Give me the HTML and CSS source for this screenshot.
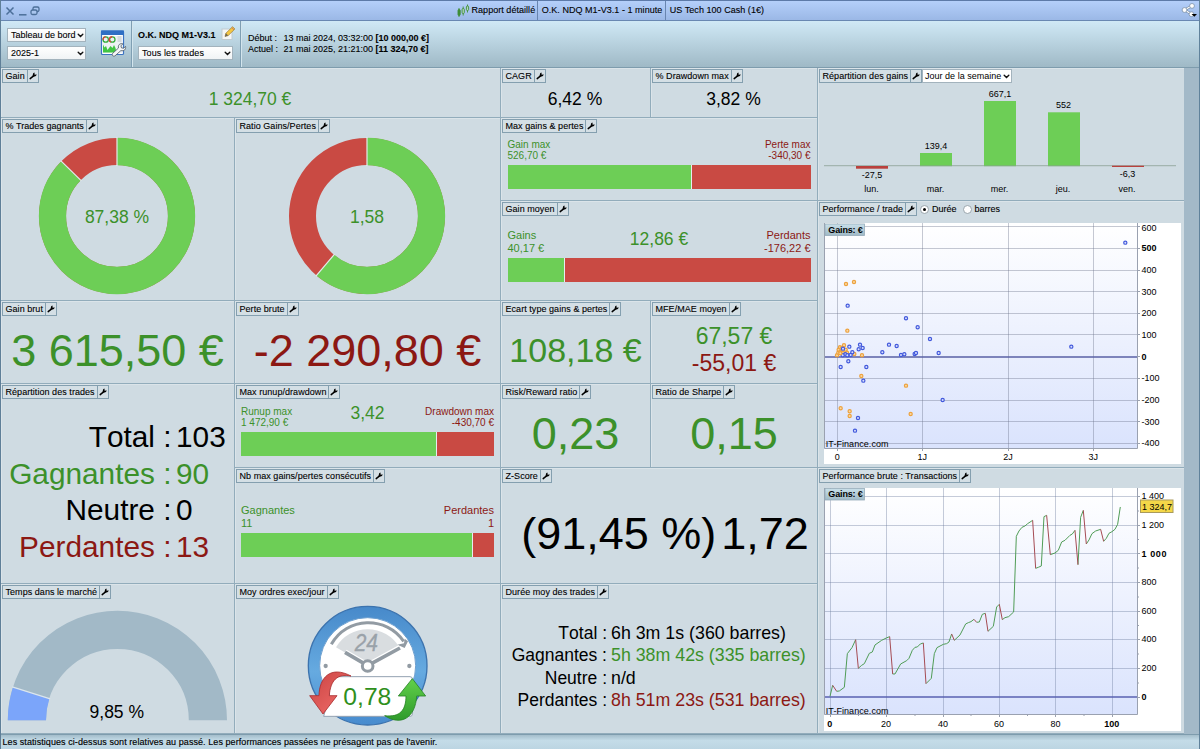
FILE: index.html
```html
<!DOCTYPE html>
<html lang="fr">
<head>
<meta charset="utf-8">
<title>Rapport détaillé</title>
<link rel="stylesheet" href="styles.css">
</head>
<body>
<svg class="defs" width="0" height="0" aria-hidden="true">
  <symbol id="wrench" viewBox="0 0 8 8"><path d="M1.200 6.600 4.600 3.900" stroke="#000" stroke-width="1.500" stroke-linecap="round"/><path d="M3.900 2.200C4.100 1.200 5 .7 5.900.9L5.200 2l.8.8L7.500 2.300c.2 1.200-.6 2.200-2 2.200H3.500Z" fill="#000"/></symbol>
  <symbol id="chev" viewBox="0 0 7 5"><path d="M1.200 1.200 3.500 3.500 5.800 1.200" fill="none" stroke="#111" stroke-width="1.400" stroke-linecap="round"/></symbol>
  <linearGradient id="plotbg" x1="0" y1="0" x2="0" y2="1"><stop offset="0" stop-color="#fff"/><stop offset="1" stop-color="#dae3fd"/></linearGradient>
  <linearGradient id="tagbg" x1="0" y1="0" x2="0" y2="1"><stop offset="0" stop-color="#c9e0ea"/><stop offset="1" stop-color="#9fb9c6"/></linearGradient>
</svg>
<div class="window">
  <header class="titlebar">
    <svg class="winctl" width="36" height="12" viewBox="0 0 36 12" fill="none" stroke="#4c6f99" stroke-width="1.300"><path d="M1.500 2.500 8.500 9.500M8.500 2.500 1.500 9.500" stroke-width="1.500"/><path d="M14 9.800h7.500" stroke-width="1.500"/><rect x="28" y="2" width="6" height="4.500" rx="1.500"/><rect x="26" y="5" width="6" height="4.500" rx="1.500" fill="#a9c5ee"/></svg>
    <div class="titles">
      <svg width="13" height="14" viewBox="0 0 13 14" fill="none" stroke="#3f8d38" stroke-width=".9"><path d="M2 4v9M6.200 2.500v9M10.500.5v8"/><rect x="1" y="5.500" width="2.200" height="6" rx="1" fill="#3f8d38"/><rect x="5.100" y="4.500" width="2.200" height="5" rx="1" fill="#b4d8c0"/><rect x="9.400" y="2" width="2.200" height="4.500" rx="1" fill="#b4d8c0"/></svg>
      <span class="title first">Rapport détaillé</span>
      <span class="title">O.K. NDQ M1-V3.1 - 1 minute</span>
      <span class="title">US Tech 100 Cash (1€)</span>
    </div>
    <svg class="share" width="17" height="15" viewBox="0 0 17 15"><path d="M11 2.800 3.500 7l7.500 4.300" stroke="#71869e" stroke-width="2.400" fill="none"/><path d="M11 2.800 3.500 7l7.500 4.300" stroke="#fff" stroke-width="1.300" fill="none"/><g fill="#fff" stroke="#71869e" stroke-width=".7"><circle cx="11" cy="2.900" r="2.400"/><circle cx="3.500" cy="7" r="2.400"/><circle cx="10.500" cy="11.200" r="2.400"/></g><path d="M10.500 11h5.500l-2.700 2.700z" fill="#000"/></svg>
  </header>
  <div class="toolbar">
    <div class="tool tool-a">
      <div class="stack">
        <div class="select w78"><span>Tableau de bord</span><svg width="7" height="5"><use href="#chev"/></svg></div>
        <div class="select w78"><span>2025-1</span><svg width="7" height="5"><use href="#chev"/></svg></div>
      </div>
      <svg width="27" height="27" viewBox="0 0 27 27"><rect x="1.500" y="1" width="22" height="23.500" rx="1" fill="#fff" stroke="#3c73c2" stroke-width="1.200"/><rect x="1" y=".5" width="23" height="4.500" fill="#2f6fc4"/><rect x="3" y="6" width="19" height="17" fill="#edf1f4"/><circle cx="5.700" cy="9.500" r="2.700" fill="none" stroke="#36ad3b" stroke-width="1.300"/><path d="M5.700 6.800A2.700 2.700 0 0 0 3.100 10" fill="none" stroke="#e0413b" stroke-width="1.300"/><circle cx="12.300" cy="9.500" r="2.700" fill="none" stroke="#36ad3b" stroke-width="1.300"/><path d="M12.300 6.800A2.700 2.700 0 0 0 11 12" fill="none" stroke="#e0413b" stroke-width="1.300"/><path d="M17.500 7h4M17.500 9h4M17.500 11h4" stroke="#bcc3c9"/><path d="M3 22.500v-8l1.500 3 1.500-1.500 1.500 4 1.500-2 1.500-2 2 2 1.500-3 1.500 3 1 4.500Z" fill="#42c544"/><path d="M12.500 23.500 18.500 18c-.8-3 1.500-5 4.400-4.200L20.900 15.900l.6 2 2.200.3 1.800-1.900c.8 3-1.600 5.100-4.600 4.300L14.800 26c-1.600.8-3.400-1-2.300-2.500Z" fill="#f4f5f6" stroke="#586570" stroke-width=".9"/></svg>
    </div>
    <div class="tool tool-b">
      <div class="name-row"><b>O.K. NDQ M1-V3.1</b>
        <svg width="15" height="15" viewBox="0 0 15 15"><rect x="1" y="3" width="10" height="10.500" fill="#f5f6f6" stroke="#c2cbd0"/><path d="m4 10.500.9-3.300 6.700-6.500 2.300 2.300-6.700 6.600Z" fill="#f5c742" stroke="#8a6d2d" stroke-width=".6"/><path d="m4 10.500.9-3.200 2.300 2.300Z" fill="#6c6558"/><path d="m10.700 1.600 2.300 2.300" stroke="#c66" stroke-width=".8"/></svg>
      </div>
      <div class="select w94"><span>Tous les trades</span><svg width="7" height="5"><use href="#chev"/></svg></div>
    </div>
    <div class="dates">
      <span>Début :</span><span>13 mai 2024, 03:32:00 <b>[10 000,00 €]</b></span>
      <span>Actuel :</span><span>21 mai 2025, 21:21:00 <b>[11 324,70 €]</b></span>
    </div>
  </div>

  <main class="board">
    <section class="panel gain"><h2><span>Gain</span><i><svg><use href="#wrench"/></svg></i></h2>
      <div class="body pos f18">1 324,70 €</div></section>

    <section class="panel cagr"><h2><span>CAGR</span><i><svg><use href="#wrench"/></svg></i></h2>
      <div class="body f18">6,42 %</div></section>

    <section class="panel ddmax"><h2><span>% Drawdown max</span><i><svg><use href="#wrench"/></svg></i></h2>
      <div class="body f18">3,82 %</div></section>

    <section class="panel repart"><div class="head-row"><h2><span>Répartition des gains</span><i><svg><use href="#wrench"/></svg></i></h2><div class="select w90"><span>Jour de la semaine</span><svg width="7" height="5"><use href="#chev"/></svg></div></div>
      <svg class="chart" width="366" height="117" viewBox="818 83 366 117">
        <g fill="#6dce56"><rect x="920" y="153" width="32" height="13"/><rect x="984" y="101" width="32" height="65"/><rect x="1048" y="112.300" width="32" height="53.700"/></g>
        <path d="M824 165.700h352" stroke="#a3b5b0" stroke-width="1.200"/>
        <path d="M920 165.700h32M984 165.700h32M1048 165.700h32" stroke="#72b866"/>
        <g fill="#b9403d"><rect x="856" y="166" width="32" height="2.700"/><rect x="1112" y="165.700" width="32" height="1.300"/></g>
        <g text-anchor="middle"><text x="872" y="178.300">-27,5</text><text x="936" y="148.800">139,4</text><text x="1000" y="97.300">667,1</text><text x="1063.500" y="108.300">552</text><text x="1127.500" y="177">-6,3</text>
        <text x="871.500" y="191.700">lun.</text><text x="935.500" y="191.700">mar.</text><text x="999.500" y="191.700">mer.</text><text x="1063" y="191.700">jeu.</text><text x="1127" y="191.700">ven.</text></g>
      </svg></section>

    <section class="panel pct"><h2><span>% Trades gagnants</span><i><svg><use href="#wrench"/></svg></i></h2>
      <div class="body"><svg class="donut" width="158" height="158" viewBox="-79 -79 158 158">
        <circle r="64.500" fill="none" stroke="#c94a43" stroke-width="27"/>
        <circle r="64.500" fill="none" stroke="#6dce56" stroke-width="27.300" pathLength="100" stroke-dasharray="87.380 12.620" transform="rotate(-90)"/>
        <path d="M0-79V-50M-56.300-55.400-35.600-35.100" stroke="#e3eaec" stroke-width="1.200"/>
        <text y="7.300" text-anchor="middle" class="big pos">87,38 %</text></svg></div></section>

    <section class="panel ratio"><h2><span>Ratio Gains/Pertes</span><i><svg><use href="#wrench"/></svg></i></h2>
      <div class="body"><svg class="donut" width="158" height="158" viewBox="-79 -79 158 158">
        <circle r="64.500" fill="none" stroke="#c94a43" stroke-width="27"/>
        <circle r="64.500" fill="none" stroke="#6dce56" stroke-width="27.300" pathLength="100" stroke-dasharray="61.200 38.800" transform="rotate(-90)"/>
        <path d="M0-79V-50M-51.100 60.200-32.400 38.100" stroke="#e3eaec" stroke-width="1.200"/>
        <text y="7.300" text-anchor="middle" class="big pos">1,58</text></svg></div></section>

    <section class="panel maxgp"><h2><span>Max gains &amp; pertes</span><i><svg><use href="#wrench"/></svg></i></h2>
      <div class="bars mid pb11"><div class="legend"><span class="pos">Gain max<br>526,70 €</span><span class="neg right">Perte max<br>-340,30 €</span></div>
      <div class="bar"><div class="win" style="flex-grow:526.7"></div><div class="loss" style="flex-grow:340.3"></div></div></div></section>

    <section class="panel gmoy"><h2><span>Gain moyen</span><i><svg><use href="#wrench"/></svg></i></h2>
      <div class="bars mid pb18"><div class="legend wide"><span class="pos">Gains<br>40,17 €</span><strong class="pos">12,86 €</strong><span class="neg right">Perdants<br>-176,22 €</span></div>
      <div class="bar"><div class="win" style="flex-grow:40.17"></div><div class="loss" style="flex-grow:176.22"></div></div></div></section>

    <section class="panel scatter"><div class="head-row"><h2><span>Performance / trade</span><i><svg><use href="#wrench"/></svg></i></h2><label class="radio on"><i></i>Durée</label><label class="radio"><i></i>barres</label></div>
      <svg class="chart" width="366" height="251" viewBox="818 216 366 251">
        <rect x="824" y="223" width="357" height="241" fill="#fff"/>
        <rect x="824.500" y="223.500" width="313" height="225" fill="url(#plotbg)"/>
        <g stroke="#68708a" stroke-opacity=".38"><path d="M825 226.500h312M825 248.500h312M825 270.500h312M825 291.500h312M825 313.500h312M825 334.500h312M825 378.500h312M825 400.500h312M825 421.500h312M825 443.500h312M837.500 223v225M922.500 223v225M1008.500 223v225M1093.500 223v225"/></g>
        <path d="M824.500 223v225.500h313V223M1137 226.500h3M1137 248.500h3M1137 270.500h3M1137 291.500h3M1137 313.500h3M1137 334.500h3M1137 356.500h3M1137 378.500h3M1137 400.500h3M1137 421.500h3M1137 443.500h3M837.500 448v3M922.500 448v3M1008.500 448v3M1093.500 448v3" fill="none" stroke="#9aa1b0"/>
        <path d="M825 357h312" stroke="#5961a5" stroke-width="1.300"/>
        <g transform="translate(815 200) scale(.3333)" stroke-width="3.600">
          <g fill="#f9d9a5" stroke="#eda23e"><circle cx="93" cy="252" r="4.800"/><circle cx="117" cy="246" r="4.800"/><circle cx="97" cy="392" r="4.800"/><circle cx="66" cy="466" r="4.800"/><circle cx="70" cy="458" r="4.800"/><circle cx="71" cy="449" r="4.800"/><circle cx="75" cy="442" r="4.800"/><circle cx="87" cy="436" r="4.800"/><circle cx="80" cy="445" r="4.800"/><circle cx="92" cy="449" r="4.800"/><circle cx="76" cy="456" r="4.800"/><circle cx="84" cy="459" r="4.800"/><circle cx="96" cy="458" r="4.800"/><circle cx="118" cy="462" r="4.800"/><circle cx="141" cy="466" r="4.800"/><circle cx="139" cy="528" r="4.800"/><circle cx="77" cy="625" r="4.800"/><circle cx="104" cy="634" r="4.800"/><circle cx="104" cy="648" r="4.800"/><circle cx="273" cy="557" r="4.800"/><circle cx="287" cy="642" r="4.800"/></g>
          <g fill="#d9e0fc" stroke="#4259dc"><circle cx="931" cy="128" r="4.800"/><circle cx="98" cy="317" r="4.800"/><circle cx="273" cy="355" r="4.800"/><circle cx="308" cy="382" r="4.800"/><circle cx="345" cy="417" r="4.800"/><circle cx="371" cy="459" r="4.800"/><circle cx="769" cy="440" r="4.800"/><circle cx="222" cy="434" r="4.800"/><circle cx="245" cy="438" r="4.800"/><circle cx="202" cy="457" r="4.800"/><circle cx="258" cy="465" r="4.800"/><circle cx="268" cy="463" r="4.800"/><circle cx="299" cy="462" r="4.800"/><circle cx="303" cy="459" r="4.800"/><circle cx="135" cy="434" r="4.800"/><circle cx="143" cy="444" r="4.800"/><circle cx="131" cy="448" r="4.800"/><circle cx="103" cy="440" r="4.800"/><circle cx="84" cy="446" r="4.800"/><circle cx="112" cy="457" r="4.800"/><circle cx="91" cy="463" r="4.800"/><circle cx="83" cy="466" r="4.800"/><circle cx="97" cy="466" r="4.800"/><circle cx="107" cy="465" r="4.800"/><circle cx="100" cy="484" r="4.800"/><circle cx="77" cy="501" r="4.800"/><circle cx="154" cy="501" r="4.800"/><circle cx="145" cy="542" r="4.800"/><circle cx="383" cy="600" r="4.800"/><circle cx="129" cy="654" r="4.800"/><circle cx="120" cy="692" r="4.800"/></g>
          <circle cx="76" cy="460" r="4.800" fill="#f9d9a5" stroke="#eda23e"/>
        </g>
        <rect x="825" y="224" width="39.500" height="11.500" fill="url(#tagbg)" stroke="#94abb8" stroke-width=".8"/><text x="828.300" y="232.800" class="b" textLength="34.500">Gains: €</text>
        <text x="825.800" y="447" textLength="62.700">IT-Finance.com</text>
        <text x="1141.500" y="231.300">600</text><text x="1141.500" y="251.300" class="b">500</text><text x="1141.500" y="273">400</text><text x="1141.500" y="294.500">300</text><text x="1141.500" y="316">200</text><text x="1141.500" y="337.500">100</text><text x="1141.500" y="360" class="b">0</text><text x="1141.500" y="381.300">-100</text><text x="1141.500" y="403">-200</text><text x="1141.500" y="424.500">-300</text><text x="1141.500" y="446">-400</text>
        <g text-anchor="middle"><text x="837.300" y="460">0</text><text x="922.300" y="460">1J</text><text x="1008" y="460">2J</text><text x="1093.300" y="460">3J</text></g>
      </svg></section>

    <section class="panel gbrut"><h2><span>Gain brut</span><i><svg><use href="#wrench"/></svg></i></h2>
      <div class="body pos f45">3 615,50 €</div></section>
    <section class="panel pbrut"><h2><span>Perte brute</span><i><svg><use href="#wrench"/></svg></i></h2>
      <div class="body neg f45">-2 290,80 €</div></section>
    <section class="panel ecart"><h2><span>Ecart type gains &amp; pertes</span><i><svg><use href="#wrench"/></svg></i></h2>
      <div class="body pos f34">108,18 €</div></section>
    <section class="panel mfe"><h2><span>MFE/MAE moyen</span><i><svg><use href="#wrench"/></svg></i></h2>
      <div class="body two"><span class="pos">67,57 €</span><span class="neg">-55,01 €</span></div></section>

    <section class="panel rtrades"><h2><span>Répartition des trades</span><i><svg><use href="#wrench"/></svg></i></h2>
      <dl class="body counts"><dt>Total :</dt><dd>103</dd><dt class="pos">Gagnantes :</dt><dd class="pos">90</dd><dt>Neutre :</dt><dd>0</dd><dt class="neg">Perdantes :</dt><dd class="neg">13</dd></dl></section>

    <section class="panel runup"><h2><span>Max runup/drawdown</span><i><svg><use href="#wrench"/></svg></i></h2>
      <div class="bars pb11"><div class="legend"><span class="pos">Runup max<br>1 472,90 €</span><strong class="pos high">3,42</strong><span class="neg right">Drawdown max<br>-430,70 €</span></div>
      <div class="bar"><div class="win" style="flex-grow:1472.9"></div><div class="loss" style="flex-grow:430.7"></div></div></div></section>

    <section class="panel rr"><h2><span>Risk/Reward ratio</span><i><svg><use href="#wrench"/></svg></i></h2>
      <div class="body pos f45">0,23</div></section>
    <section class="panel sharpe"><h2><span>Ratio de Sharpe</span><i><svg><use href="#wrench"/></svg></i></h2>
      <div class="body pos f45">0,15</div></section>

    <section class="panel consec"><h2><span>Nb max gains/pertes consécutifs</span><i><svg><use href="#wrench"/></svg></i></h2>
      <div class="bars pb26"><div class="legend wide"><span class="pos">Gagnantes<br>11</span><span class="neg right">Perdantes<br>1</span></div>
      <div class="bar"><div class="win" style="flex-grow:11"></div><div class="loss" style="flex-grow:1"></div></div></div></section>

    <section class="panel zscore"><h2><span>Z-Score</span><i><svg><use href="#wrench"/></svg></i></h2>
      <div class="body f45 z"><span>(91,45 %)</span><span>1,72</span></div></section>

    <section class="panel curve"><h2><span>Performance brute : Transactions</span><i><svg><use href="#wrench"/></svg></i></h2>
      <svg class="chart" width="366" height="250" viewBox="818 483 366 250">
        <rect x="824" y="488" width="357" height="243" fill="#fff"/>
        <rect x="824.500" y="488.500" width="313" height="226" fill="url(#plotbg)"/>
        <g stroke="#687a9a" stroke-opacity=".38"><path d="M825 496.500h312M825 525.500h312M825 553.500h312M825 582.500h312M825 611.500h312M825 639.500h312M825 668.500h312M830.500 488v226M886.500 488v226M943.500 488v226M999.500 488v226M1055.500 488v226M1112.500 488v226"/></g>
        <path d="M824.500 488v226.500h313V488M1137 496.500h3M1137 525.500h3M1137 553.500h3M1137 582.500h3M1137 611.500h3M1137 639.500h3M1137 668.500h3M1137 697.500h3M1137 511h2M1137 539.500h2M1137 568h2M1137 597h2M1137 625.500h2M1137 654h2M1137 683h2M830.500 714v3M886.500 714v3M943.500 714v3M999.500 714v3M1055.500 714v3M1112.500 714v3M858.500 714v2M915 714v2M971 714v2M1027.500 714v2M1084 714v2" fill="none" stroke="#9aa1b0"/>
        <path d="M825 697h312" stroke="#5961b0" stroke-width="1.300"/>
        <g transform="translate(815 465) scale(.3333)" fill="none" stroke-width="3" stroke-linejoin="round">
          <path stroke="#4f9c55" d="M45 694 53 661M65 679 73 678 88 667 97 566 111 548 122 524M130 610 140 601 148 596 163 565 172 561 180 540 200 526 214 519 224 515M233 627 240 627 257 597 275 587 282 580 292 556 300 547 307 546 316 537 325 534M333 656 349 640 358 566 366 548 385 538 395 536 402 531 410 507M418 526 435 510 452 477 460 473 468 470 477 463M485 472 493 471 502 448 511 445M519 499 535 484 545 426 553 418M562 464 570 458 581 455 596 441 604 214 612 198 621 187 630 183 638 176 653 166M662 310 670 307 679 303 687 155 695 151M706 269 720 264 730 256 740 231 750 226 765 211 772 207 780 196M789 299 797 157 805 136M814 237 822 225 831 206 842 198 857 193M866 229 874 220 882 205 891 200 900 193 908 178 916 126"/>
          <path stroke="#a54a52" d="M53 661 65 679M122 524 130 610M224 515 233 627M325 534 333 656M410 507 418 526M477 463 485 472M511 445 519 499M553 418 562 464M653 166 662 310M695 151 706 269M780 196 789 299M805 136 814 237M857 193 866 229"/>
        </g>
        <rect x="825" y="488.500" width="39.500" height="11.500" fill="url(#tagbg)" stroke="#94abb8" stroke-width=".8"/><text x="828.300" y="497.200" class="b" textLength="34.500">Gains: €</text>
        <text x="825.800" y="713.500" textLength="62.700">IT-Finance.com</text>
        <text x="1141.500" y="499.300">1 400</text><text x="1141.500" y="528">1 200</text><text x="1141.500" y="556.500" class="b" textLength="25">1 000</text><text x="1141.500" y="585.300">800</text><text x="1141.500" y="613.800">600</text><text x="1141.500" y="642.300">400</text><text x="1141.500" y="671">200</text><text x="1141.500" y="700" class="b">0</text>
        <rect x="1140.500" y="500" width="32.500" height="12.500" fill="#f4d748" stroke="#a99a5c"/><text x="1142" y="509.500">1 324,7</text>
        <g text-anchor="middle"><text x="829.700" y="727" class="b">0</text><text x="886" y="727">20</text><text x="943" y="727">40</text><text x="999" y="727">60</text><text x="1055.500" y="727">80</text><text x="1111.700" y="727" class="b">100</text></g>
      </svg></section>

    <section class="panel temps"><h2><span>Temps dans le marché</span><i><svg><use href="#wrench"/></svg></i></h2>
      <svg class="chart" width="233" height="134" viewBox="1 599 233 134">
        <path d="M26.900 720.300A90.500 90.500 0 0 1 207.900 720.300" fill="none" stroke="#a2b9c7" stroke-width="38.200"/>
        <path d="M26.900 720.300A90.500 90.500 0 0 1 31.200 692.700" fill="none" stroke="#7ba5fa" stroke-width="38.200"/>
        <path d="M12.200 686.900 50.200 698.900" stroke="#dce6ec" stroke-width="1.200"/>
        <text x="116.800" y="718.300" text-anchor="middle" class="big">9,85 %</text>
      </svg></section>

    <section class="panel ordres"><h2><span>Moy ordres exec/jour</span><i><svg><use href="#wrench"/></svg></i></h2>
      <svg class="chart" width="265" height="134" viewBox="0 57 795 402">
        <defs><linearGradient id="ring" x1="0" y1="0" x2="0" y2="1"><stop offset="0" stop-color="#4789ca"/><stop offset=".55" stop-color="#66aae0"/><stop offset="1" stop-color="#478bce"/></linearGradient>
        <linearGradient id="redarr" x1="0" y1="0" x2="1" y2="1"><stop offset="0" stop-color="#c94343"/><stop offset="1" stop-color="#f4706c"/></linearGradient>
        <linearGradient id="grnarr" x1="0" y1="0" x2="0" y2="1"><stop offset="0" stop-color="#62d04a"/><stop offset="1" stop-color="#2f9b2c"/></linearGradient></defs>
        <circle cx="398" cy="257" r="178" fill="url(#ring)" stroke="#3c73ae" stroke-width="4"/>
        <circle cx="398" cy="257" r="144" fill="#fff" stroke="#6d9fcf" stroke-width="3"/>
        <path d="M398 257 303 202A110 110 0 0 1 493 202Z" fill="#d9dde0"/>
        <path d="M289 193C335 109 455 107 506 184" fill="none" stroke="#929ba3" stroke-width="9"/>
        <path d="M519 184 509 204 487 194 507 190 509 176Z" fill="#929ba3"/>
        <text x="394" y="213" text-anchor="middle" class="h24" textLength="70" lengthAdjust="spacingAndGlyphs">24</text>
        <path d="M330 217 398 257 495 204" fill="none" stroke="#fff" stroke-width="18"/>
        <path d="M330 217 398 257 495 204" fill="none" stroke="#929ba3" stroke-width="11"/>
        <circle cx="398" cy="258" r="16" fill="#fff" stroke="#929ba3" stroke-width="9"/>
        <circle cx="272" cy="258" r="6.500" fill="#929ba3"/><circle cx="523" cy="258" r="6.500" fill="#929ba3"/>
        <path d="M282 290H525Q532 290 532 297V402Q532 409 525 409H266L283 347Z" fill="#fff" stroke="#94a2b1" stroke-width="3"/>
        <path d="M348 288C307 280 286 301 283 347L306 347 264 402 224 347 252 347C253 292 287 256 348 288Z" fill="url(#redarr)" stroke="#a92f30" stroke-width="2.500"/>
        <path d="M449 407C496 413 513 389 513 348L490 348 532 296 572 348 545 348C541 414 498 439 449 407Z" fill="url(#grnarr)" stroke="#288425" stroke-width="2.500"/>
        <text x="397" y="375" text-anchor="middle" class="h78">0,78</text>
      </svg></section>

    <section class="panel duree"><h2><span>Durée moy des trades</span><i><svg><use href="#wrench"/></svg></i></h2>
      <dl class="body times"><dt>Total :</dt><dd>6h 3m 1s (360 barres)</dd><dt>Gagnantes :</dt><dd class="pos">5h 38m 42s (335 barres)</dd><dt>Neutre :</dt><dd>n/d</dd><dt>Perdantes :</dt><dd class="neg">8h 51m 23s (531 barres)</dd></dl></section>
  </main>
  <footer class="status">Les statistiques ci-dessus sont relatives au passé. Les performances passées ne présagent pas de l'avenir.</footer>
</div>
</body>
</html>
```
FILE: styles.css
```css
* { box-sizing: border-box; }
body { margin: 0; font-family: "Liberation Sans", Arial, sans-serif; font-size: 9px; color: #000; }
svg { display: block; flex: none; }
.defs { position: absolute; }
.window { width: 1200px; height: 749px; display: flex; flex-direction: column; background: #a3b9c8; border-left: 1px solid #5f7f98; border-right: 1px solid #60829b; overflow: hidden; white-space: nowrap; }

.titlebar { height: 21px; flex: none; display: flex; align-items: center; justify-content: space-between; background: linear-gradient(#b4cffa, #9bb8e6); border-top: 1px solid #5d7aa8; border-bottom: 1px solid #6988b2; -webkit-text-stroke: 0.1px #000; }
.winctl { margin-left: 4px; }
.titles { display: flex; align-items: center; height: 19px; margin-left: 407px; margin-right: auto; padding-left: 9px; }
.title { line-height: 19px; border-left: 1px solid #6885b0; padding: 0 3px; letter-spacing: 0.04px; }
.title + .title { padding-left: 3.500px; }
.title.first { border: 0; padding: 0 2px 0 1.500px; }
.share { margin-right: 1px; }

.toolbar { height: 47px; flex: none; display: flex; background: linear-gradient(#d0e9f6, #9fb9c6); border-bottom: 1px solid #7e9cad; -webkit-text-stroke: 0.1px #000; }
.tool { border-right: 1px solid #7f9fb3; box-shadow: 1px 0 #d3e5ed; padding-top: 7px; }
.tool-a { width: 131px; display: flex; gap: 14px; padding-left: 6px; }
.tool-a > svg { margin-top: 2px; }
.stack { display: flex; flex-direction: column; gap: 4px; }
.select { height: 14px; display: flex; align-items: center; justify-content: space-between; background: linear-gradient(#fff, #f0f3f5); border: 1px solid #a3b3bd; padding: 0 1.500px 0 3px; }
.w78 { width: 79px; }
.w94 { width: 95px; letter-spacing: 0.1px; }
.w90 { width: 90px; background: #fff; padding-left: 2px; }
.tool-b { width: 109px; padding-left: 6px; padding-top: 5px; }
.name-row { display: flex; align-items: center; justify-content: space-between; width: 98px; height: 18px; margin-bottom: 2px; }
.name-row svg { margin-top: -3px; }
.dates { display: grid; grid-template-columns: 35.500px auto; grid-auto-rows: 11px; line-height: 11px; padding: 12px 0 0 7px; align-content: start; }

.board { width: 1183px; flex: none; display: grid; grid-template-columns: 234px 266px 150px 167px 366px; grid-template-rows: 50px 83px 100px 83px 84px 116px 150px; }
.panel { background: #cfdbe2; border-right: 1px solid #92acbb; border-bottom: 1px solid #92acbb; display: flex; flex-direction: column; min-width: 0; min-height: 0; box-shadow: inset 1px 1px #dbe4e9; overflow: hidden; }
.panel h2 { margin: 1px 0 0 1px; height: 14px; flex: none; align-self: flex-start; display: flex; font-size: 9px; font-weight: normal; line-height: 12px; background: #d4dfe5; border: 1px solid #849faf; letter-spacing: 0.05px; -webkit-text-stroke: 0.1px #000; }
.panel h2 span { padding: 0 2px 0 2.500px; }
.panel h2 i { width: 11px; border-left: 1px solid #849faf; display: flex; align-items: center; justify-content: center; }
.panel h2 i svg { width: 8px; height: 8px; }
.head-row { display: flex; flex: none; }
.head-row .select { margin: 1px 0 0; }
.radio { display: flex; align-items: center; gap: 3px; margin: 1px 0 0 3px; height: 14px; -webkit-text-stroke: 0.1px #000; }
.radio + .radio { margin-left: 6px; }
.radio i { width: 9px; height: 9px; border-radius: 50%; background: #fff; border: 1px solid #9aa6ad; display: flex; align-items: center; justify-content: center; }
.radio.on i::after { content: ""; width: 3px; height: 3px; border-radius: 50%; background: #000; }

.gain { grid-area: 1 / 1 / 2 / 3; }
.cagr { grid-area: 1 / 3; }
.ddmax { grid-area: 1 / 4; }
.repart { grid-area: 1 / 5 / 3 / 6; }
.pct { grid-area: 2 / 1 / 4 / 2; }
.ratio { grid-area: 2 / 2 / 4 / 3; }
.maxgp { grid-area: 2 / 3 / 3 / 5; }
.gmoy { grid-area: 3 / 3 / 4 / 5; }
.scatter { grid-area: 3 / 5 / 6 / 6; }
.gbrut { grid-area: 4 / 1; }
.pbrut { grid-area: 4 / 2; }
.ecart { grid-area: 4 / 3; }
.mfe { grid-area: 4 / 4; }
.rtrades { grid-area: 5 / 1 / 7 / 2; }
.runup { grid-area: 5 / 2; }
.rr { grid-area: 5 / 3; }
.sharpe { grid-area: 5 / 4; }
.consec { grid-area: 6 / 2; }
.zscore { grid-area: 6 / 3 / 7 / 5; }
.curve { grid-area: 6 / 5 / 8 / 6; }
.temps { grid-area: 7 / 1; }
.ordres { grid-area: 7 / 2; }
.duree { grid-area: 7 / 3 / 8 / 5; }
.repart, .scatter, .curve { border-right: 0; }

.body { flex: 1; min-height: 0; margin: 0; display: flex; align-items: center; justify-content: center; line-height: 1; }
.donut { margin: -2px 1px 0 0; }
.pos { color: #3c912a; fill: #3c912a; }
.neg { color: #8c1813; fill: #8c1813; }
.f18 { font-size: 17.500px; padding-right: 1px; }
.f34 { font-size: 34px; padding-top: 1px; }
.f45 { font-size: 45px; padding-top: 1px; }
.two { flex-direction: column; font-size: 23px; }
.two span { line-height: 27px; }
.z { gap: 5px; padding-left: 12px; }
.z span { flex: none; }
.counts { display: grid; grid-template-columns: 170.500px auto; grid-auto-rows: 36.700px; column-gap: 4.500px; font-size: 29.800px; line-height: 36.700px; justify-content: start; align-content: start; padding-top: 20px; font-kerning: none; }
.times { display: grid; grid-template-columns: 106px auto; grid-auto-rows: 22.300px; column-gap: 4px; font-size: 17.800px; line-height: 22.300px; justify-content: start; align-content: start; padding-top: 23px; font-kerning: none; }
.times dt { font-size: 17.500px; }
dt { text-align: right; }
dd { margin: 0; }

.bars { flex: 1; display: flex; flex-direction: column; justify-content: flex-end; padding-left: 6px; padding-right: 6px; }
.bars.mid { padding-left: 6.500px; padding-right: 6.500px; }
.pb11 { padding-bottom: 11px; }
.pb18 { padding-bottom: 18px; }
.pb26 { padding-bottom: 26px; }
.legend { display: flex; justify-content: space-between; font-size: 10px; line-height: 11.700px; margin-bottom: 3px; }
.legend.wide { font-size: 11px; line-height: 13px; }
.legend span { flex: 1; }
.legend .right { text-align: right; }
.legend strong { font-size: 17.500px; font-weight: normal; line-height: 20px; }
.legend strong.high { line-height: 15px; }
.bar { display: flex; gap: 1px; height: 24px; background: #e6edf0; }
.win { flex: 1 1 0; background: #6dce56; }
.loss { flex: 1 1 0; background: #c94a43; }

.chart text { font-size: 9px; }
.chart text.b { font-weight: bold; }
.chart text.big, .donut text.big { font-size: 17.500px; }
.chart text.h24 { font-size: 72px; font-style: italic; fill: #9aa2a9; stroke: #9aa2a9; stroke-width: 1px; }
.chart text.h78 { font-size: 74px; fill: #2f8f1c; }

.status { flex: 1; background: linear-gradient(#a4bdcb, #c4dce8 40%, #bcd5e2); border-top: 1px solid #7e9cad; border-bottom: 1px solid #6f8fa3; line-height: 14px; padding-left: 1.500px; letter-spacing: 0.07px; -webkit-text-stroke: 0.15px #000; }
```
